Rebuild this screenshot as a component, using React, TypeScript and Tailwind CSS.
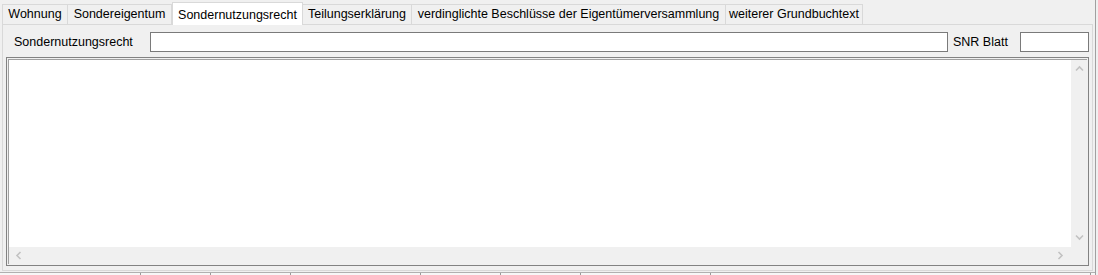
import { ReactNode } from 'react';

const tabs = [
  { label: 'Wohnung', w: 66 },
  { label: 'Sondereigentum', w: 104 },
  { label: 'Sondernutzungsrecht', w: 131, active: true },
  { label: 'Teilungserklärung', w: 109 },
  { label: 'verdinglichte Beschlüsse der Eigentümerversammlung', w: 314 },
  { label: 'weiterer Grundbuchtext', w: 137 },
];

const footerCells = [141, 70, 80, 130, 80, 80, 130, 380];

function Chevron({ dir }: { dir: 'up' | 'down' | 'left' | 'right' }) {
  const rot = { up: 0, right: 90, down: 180, left: 270 }[dir];
  return (
    <svg width="9" height="9" viewBox="0 0 9 9" style={{ transform: `rotate(${rot}deg)` }}>
      <path d="M1 6.5 L4.5 3 L8 6.5" fill="none" stroke="#c2c2c2" strokeWidth="1.6" />
    </svg>
  );
}

function Tab({ label, w, active }: { label: string; w: number; active?: boolean }) {
  if (active) {
    return (
      <div
        className="relative z-10 -mb-px flex h-[23px] items-start justify-center whitespace-nowrap border border-b-0 border-[#d9d9d9] bg-white pt-[3px]"
        style={{ width: w }}
      >
        {label}
      </div>
    );
  }
  return (
    <div
      className="flex h-[20px] items-center justify-center whitespace-nowrap border border-b-0 border-l-0 border-[#d9d9d9] bg-[#f0f0f0] first:border-l"
      style={{ width: w }}
    >
      {label}
    </div>
  );
}

function Input({ className }: { className: string }) {
  return <div className={`h-[20px] border border-[#7a7a7a] bg-white ${className}`} />;
}

function Scroll({ children, className }: { children?: ReactNode; className: string }) {
  return <div className={`bg-[#f0f0f0] ${className}`}>{children}</div>;
}

export default function App() {
  return (
    <div
      className="flex h-[275px] w-[1098px] overflow-hidden bg-[#f0f0f0] text-[12.5px] text-black"
      style={{ fontFamily: '"Liberation Sans", Arial, sans-serif' }}
    >
      <div className="flex w-[1095px] flex-col">
        {/* Tabs */}
        <div className="flex h-[24px] items-end pl-[2px]">
          {tabs.map((t) => (
            <Tab key={t.label} {...t} />
          ))}
        </div>

        {/* Panel */}
        <div className="ml-[2px] flex h-[247px] w-[1091px] flex-col border border-[#d9d9d9] px-[3px] pt-[7px]">
          <div className="flex h-[20px] items-center">
            <div className="w-[144px] pl-[8px]">Sondernutzungsrecht</div>
            <Input className="flex-1" />
            <div className="w-[72px] pl-[5px]">SNR Blatt</div>
            <Input className="w-[69px]" />
          </div>

          <div className="mt-[5px] flex h-[209px] flex-col border border-[#828282] p-px">
            <div className="flex flex-1 flex-col border-t border-l border-[#a0a0a0]">
              <div className="flex flex-1">
                <div className="flex-1 bg-white" />
                <Scroll className="flex w-[16px] flex-col items-center justify-between py-[5px] pt-[4px]">
                  <Chevron dir="up" />
                  <Chevron dir="down" />
                </Scroll>
              </div>
              <Scroll className="flex h-[17px] items-center justify-between pl-[5px] pr-[22px]">
                <Chevron dir="left" />
                <Chevron dir="right" />
              </Scroll>
            </div>
          </div>
        </div>

        {/* Footer cells */}
        <div className="mt-[1px] flex h-[3px] border-t border-[#b0b0b0] bg-[#f7f7f7]">
          {footerCells.map((w, i) => (
            <div key={i} className="border-r border-[#9a9a9a]" style={{ width: w }} />
          ))}
        </div>
      </div>
      <div className="w-px bg-[#a0a0a0]" />
    </div>
  );
}
